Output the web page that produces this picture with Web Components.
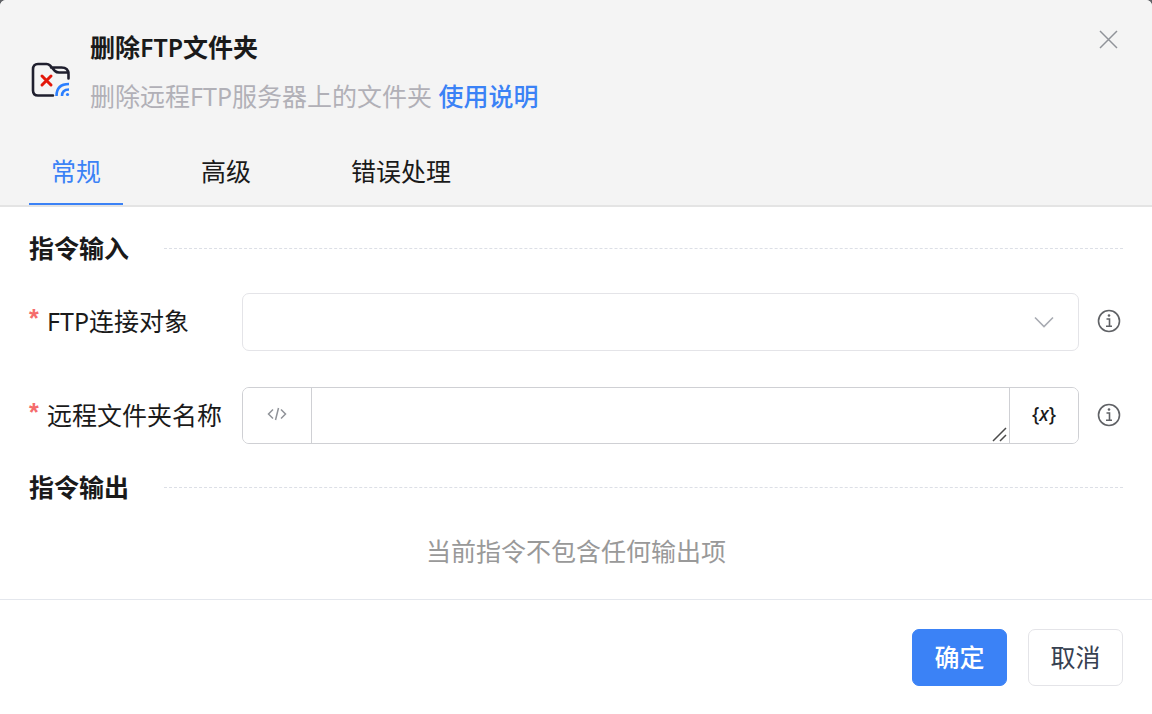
<!DOCTYPE html>
<html lang="zh-CN">
<head>
<meta charset="utf-8">
<title>删除FTP文件夹</title>
<style>
  html, body { height: 100%; }
  body {
    margin: 0;
    background: #606266;
    color: #1a1a1a;
    font: 25px/38px "Noto Sans", "Noto Sans CJK SC", sans-serif;
  }
</style>
</head>
<body>
<command-dialog>
  <dialog-header slot="header" heading="删除FTP文件夹">
    删除远程FTP服务器上的文件夹 <a href="#help">使用说明</a>
  </dialog-header>
  <tab-bar slot="header" tabs="常规,高级,错误处理"></tab-bar>
  <form-section heading="指令输入">
    <select-field label="FTP连接对象"></select-field>
    <expression-field label="远程文件夹名称"></expression-field>
  </form-section>
  <form-section heading="指令输出">
    <empty-note>当前指令不包含任何输出项</empty-note>
  </form-section>
  <action-button slot="footer" primary>确定</action-button>
  <action-button slot="footer">取消</action-button>
</command-dialog>

<script>
const define = (name, html, setup) => {
  const template = document.createElement('template');
  template.innerHTML = html;
  customElements.define(name, class extends HTMLElement {
    constructor() {
      super();
      this.attachShadow({ mode: 'open' }).append(template.content.cloneNode(true));
    }
    connectedCallback() { if (setup) setup(this, this.shadowRoot); }
  });
};

define('command-dialog', `
  <style>
    :host { display: flex; flex-direction: column; min-height: 100%; background: #fff; border-radius: 6px 6px 0 0; overflow: hidden; }
    header { background: #f4f4f4; border-bottom: 2px solid #e4e4e4; }
    main { flex: 1; padding: 22px 29px 0; display: flex; flex-direction: column; gap: 24px; }
    footer { display: flex; justify-content: flex-end; gap: 21px; padding: 29px 29px 28px; border-top: 1px solid #e4e7ed; }
  </style>
  <header><slot name="header"></slot></header>
  <main><slot></slot></main>
  <footer><slot name="footer"></slot></footer>`);

define('dialog-header', `
  <style>
    :host { display: flex; align-items: flex-end; padding: 28px 29px 0; }
    .logo { width: 44px; height: 44px; margin: 0 17px 17px 0; flex: none; }
    .text { flex: 1; display: flex; flex-direction: column; gap: 11px; padding-bottom: 5px; }
    h1 { margin: 0; font-size: 25px; font-weight: 600; line-height: 38px; color: #1a1a1a; }
    p { margin: 0; color: #b1b0b7; }
    ::slotted(a) { color: #3b82f6; font-weight: 500; text-decoration: none; }
    button { align-self: flex-start; width: 30px; height: 30px; padding: 0; border: 0; background: none; }
    button svg { display: block; }
  </style>
  <svg class="logo" viewBox="0 0 44 44" fill="none" stroke-linecap="round" aria-hidden="true">
    <path d="M24 36.500H9q-5 0-5-5V10.500q0-5.500 5-5.500h8.500q2 0 3.500 1.500L26 12q1.500 1.500 4 1.500h9.500M39.500 19.500v-4.500q0-6.500-7-6.500H22" stroke="#1f1f2e" stroke-width="2.600"/>
    <path d="m13 17 9 9m0-9-9 9" stroke="#e3170a" stroke-width="3"/>
    <path d="M27.500 37q0-12 12.500-12M33 37q0-6.500 7-6.500" stroke="#2b7fff" stroke-width="2.600" stroke-linecap="butt"/>
    <circle cx="38.500" cy="35.500" r="1.600" fill="#2b7fff"/>
  </svg>
  <div class="text"><h1></h1><p><slot></slot></p></div>
  <button type="button" aria-label="关闭">
    <svg width="30" height="30" viewBox="0 0 30 30" stroke="#909399" stroke-width="1.500"><path d="m7 3 17 17M24 3 7 20"/></svg>
  </button>`,
  (host, root) => { root.querySelector('h1').textContent = host.getAttribute('heading'); });

define('tab-bar', `
  <style>
    :host { display: flex; gap: 56px; padding: 20px 29px 0; }
    button { font: inherit; color: #1a1a1a; background: none; border: 0; border-bottom: 2px solid transparent; padding: 12px 22px 13px; }
    button[aria-selected=true] { color: #3b82f6; border-color: #3b82f6; }
  </style>`,
  (host, root) => {
    host.setAttribute('role', 'tablist');
    const select = (tab) => root.querySelectorAll('button').forEach((b) => b.setAttribute('aria-selected', b === tab));
    host.getAttribute('tabs').split(',').forEach((name) => {
      const tab = document.createElement('button');
      tab.type = 'button';
      tab.setAttribute('role', 'tab');
      tab.textContent = name;
      tab.addEventListener('click', () => select(tab));
      root.append(tab);
    });
    select(root.querySelector('button'));
  });

define('form-section', `
  <style>
    :host { display: block; }
    .head { display: flex; align-items: center; gap: 35px; }
    h2 { margin: 0; font-size: 25px; font-weight: 700; line-height: 38px; }
    .rule { flex: 1; border-top: 1px dashed #dcdfe6; }
    .content { display: flex; flex-direction: column; gap: 36px; margin-top: 26px; }
  </style>
  <div class="head"><h2></h2><div class="rule"></div></div>
  <div class="content"><slot></slot></div>`,
  (host, root) => { root.querySelector('h2').textContent = host.getAttribute('heading'); });

define('empty-note', `
  <style>:host { display: block; text-align: center; color: #999; margin-bottom: 20px; }</style>
  <slot></slot>`);

const fieldStyle = `
    :host { display: grid; grid-template-columns: 213px 1fr 44px; align-items: center; }
    label { display: flex; gap: 8px; padding-bottom: 2px; white-space: nowrap; }
    label::before { content: "*"; color: #f56c6c; width: 10px; font-family: "Liberation Sans", sans-serif; font-weight: 700; line-height: 32px; }
    .info { justify-self: end; margin-right: 2px; padding: 0 0 2px; border: 0; background: none; }
    .info svg { display: block; }`;
const infoButton = `
  <button class="info" type="button" aria-label="说明">
    <svg width="24" height="24" viewBox="0 0 24 24" fill="none" stroke="#606266" stroke-width="1.600">
      <circle cx="12" cy="12" r="10.500"/>
      <path d="M9.500 10h3v7M9 17.300h6"/>
      <circle cx="12" cy="6.500" r="1.300" fill="#606266" stroke="none"/>
    </svg>
  </button>`;
const setLabel = (host, root) => { root.querySelector('label').append(host.getAttribute('label')); };

define('select-field', `
  <style>${fieldStyle}
    .box { display: grid; align-items: center; }
    select, .box svg { grid-area: 1 / 1; }
    select { appearance: none; width: 100%; height: 58px; box-sizing: border-box; font: inherit; color: inherit; background: #fff; border: 1px solid #e4e4e8; border-radius: 7px; padding: 0 60px 0 20px; }
    .box svg { justify-self: end; margin-right: 24px; pointer-events: none; }
  </style>
  <label for="control"></label>
  <div class="box">
    <select id="control" required><option value=""></option></select>
    <svg width="22" height="14" viewBox="0 0 22 14" fill="none" stroke="#a8abb2" stroke-width="1.600"><path d="m2 2.500 9 9 9-9"/></svg>
  </div>${infoButton}`, setLabel);

define('expression-field', `
  <style>${fieldStyle}
    .box { display: grid; grid-template: 100% / 68px 1fr 68px; height: 57px; box-sizing: border-box; border: 1px solid #cfd0d4; border-radius: 7px; overflow: hidden; }
    .box button { display: grid; place-items: center; padding: 0 0 3px; border: 0; background: #fff; color: #1a1a1a; font: 500 19px/24px "Noto Sans", sans-serif; }
    .entry { position: relative; border: solid #cfd0d4; border-width: 0 1px; }
    textarea { display: block; width: 100%; height: 100%; box-sizing: border-box; border: 0; resize: none; font: inherit; padding: 8px 20px; outline: 0; }
    .grip { position: absolute; right: 1px; bottom: 0; pointer-events: none; }
  </style>
  <label for="control"></label>
  <div class="box">
    <button type="button" aria-label="表达式">
      <svg width="20" height="16" viewBox="0 0 20 16" fill="none" stroke="#909399" stroke-width="1.500"><path d="M6 3.500 1.500 8 6 12.500M14 3.500 18.500 8 14 12.500M11.500 2l-3 12"/></svg>
    </button>
    <div class="entry">
      <textarea id="control" required></textarea>
      <svg class="grip" width="16" height="16" viewBox="0 0 16 16" stroke="#4a4a4a" stroke-width="1.500"><path d="M1 14 14 1M8 14l6-6"/></svg>
    </div>
    <button type="button"><span>{<i>x</i>}</span></button>
  </div>${infoButton}`, setLabel);

define('action-button', `
  <style>
    :host { display: block; }
    button { font: inherit; min-width: 95px; height: 57px; padding: 0 21px 2px; border: 1px solid #e4e4e8; border-radius: 7px; background: #fff; color: #374151; }
    :host([primary]) button { background: #3b82f6; border-color: #3b82f6; color: #fff; font-weight: 500; }
  </style>
  <button type="button"><slot></slot></button>`);
</script>
</body>
</html>
